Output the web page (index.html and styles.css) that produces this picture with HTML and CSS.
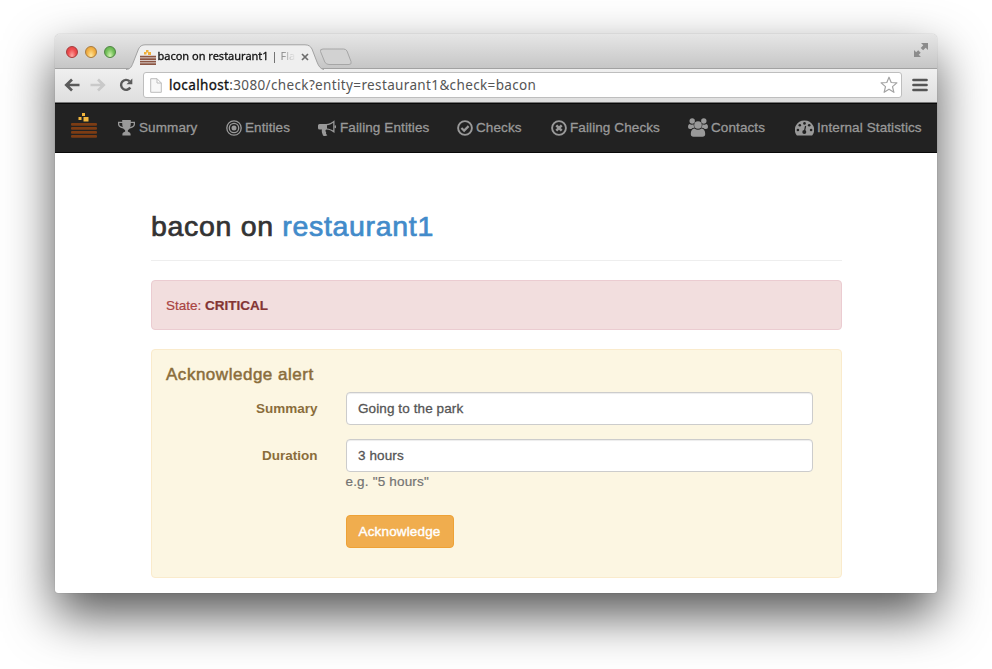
FILE: index.html
```html
<!DOCTYPE html>
<html lang="en">
<head>
<meta charset="utf-8">
<title>bacon on restaurant1 | Flapjack</title>
<link rel="stylesheet" href="styles.css">
</head>
<body>
<svg width="0" height="0" class="defs">
  <symbol id="flapjack" viewBox="0 0 26 25">
    <g fill="#f2b63d"><rect x="11" y="0" width="3" height="3"/><rect x="7.500" y="4" width="3" height="3"/><rect x="12.500" y="4" width="5" height="4.500"/></g>
    <g fill="#7c3c14"><rect y="10" width="26" height="2.800" rx="1"/><rect y="14" width="26" height="2.800" rx="1"/><rect y="18" width="26" height="2.800" rx="1"/><rect y="22" width="26" height="2.800" rx="1"/></g>
  </symbol>
</svg>
<div class="window">
  <header class="tabbar">
    <div class="lights"><i class="red"></i><i class="yellow"></i><i class="green"></i></div>
    <div class="tab">
      <svg class="tab-shape" viewBox="0 0 198 26"><path d="M0 25.500C4 25 5 24 7 19L12.500 5Q14.500 .8 19 .8H179Q184 .8 186 5L191 18Q193.500 25 198 25.500Z" fill="#efefef"/><path d="M0 25.500C4 25 5 24 7 19L12.500 5Q14.500 .8 19 .8H179Q184 .8 186 5L191 18Q193.500 25 198 25.500" fill="none" stroke="#a2a2a2"/></svg>
      <svg class="favicon" viewBox="0 0 16 15"><g fill="#f0ae38"><rect x="6" width="2.500" height="2.500"/><rect x="4" y="2" width="2.500" height="2.500"/><rect x="8" y="2" width="3" height="3"/></g><path d="M0 6.700h16M0 9.200h16M0 11.700h16M0 14.200h16" stroke="#8b5543" stroke-width="1.700"/></svg>
      <span class="tab-title">bacon on restaurant1 <span>| Flap</span></span>
      <svg class="close" viewBox="0 0 8 8"><path d="M1 1l6 6M7 1L1 7" stroke="#6d6d6d" stroke-width="1.700"/></svg>
    </div>
    <svg class="newtab" viewBox="0 0 34 18"><path d="M4 1H24.500Q27 1 28 3L32 13.500Q33 16.500 30 16.500H10Q7 16.500 5.800 14L1.500 3.500Q.8 1 4 1Z" fill="#d2d2d2" stroke="#a6a6a6"/></svg>
    <svg class="expand" viewBox="0 0 14 14"><path d="M7 0h7v7l-2.300-2.300-2.600 2.600-2.400-2.400 2.600-2.600zM0 7l2.200 2.200 2-2 2.500 2.500-2 2L7 14H0z" fill="#8c8c8c"/></svg>
  </header>
  <div class="toolbar">
    <svg class="back" viewBox="0 0 16 14"><path d="M15.500 7H3M8 1.500L2.300 7 8 12.500" fill="none" stroke="#5b5b5b" stroke-width="2.700"/></svg>
    <svg class="fwd" viewBox="0 0 16 14"><path d="M.5 7H13M8 1.500L13.700 7 8 12.500" fill="none" stroke="#c9c9c9" stroke-width="2.700"/></svg>
    <svg class="reload" viewBox="0 0 14 14"><path d="M11.300 9.500A5 5 0 1 1 10.500 3.200" fill="none" stroke="#5b5b5b" stroke-width="2.400"/><path d="M13.300.5V6.300H7.500z" fill="#5b5b5b"/></svg>
    <div class="url">
      <svg class="page" viewBox="0 0 12 15"><path d="M.7.700H7L11.300 5V14.300H.7Z M7 .7V5h4.300" fill="#f7f7f7" stroke="#bcbcbc"/></svg>
      <span class="address"><b>localhost</b>:3080/check?entity=restaurant1&amp;check=bacon</span>
      <svg class="star" viewBox="0 0 18 18"><path d="M9 1.200l2.200 5.300 5.700.4-4.400 3.700 1.400 5.700L9 13.200l-4.900 3.100 1.400-5.700L1.100 6.900l5.700-.4z" fill="#fff" stroke="#a3a3a3" stroke-width="1.200" stroke-linejoin="round"/></svg>
    </div>
    <svg class="menu" viewBox="0 0 16 14"><path d="M1.500 2h13M1.500 7h13M1.500 12h13" stroke="#555" stroke-width="2.700" stroke-linecap="round"/></svg>
  </div>
  <nav class="nav">
    <svg class="brand"><use href="#flapjack"/></svg>
    <a class="summary"><svg viewBox="0 0 17 16"><path d="M4.200 0h8.600v1.800H17v2.500C17 6.500 14.700 8.300 11.800 8.500 10.800 9.600 9.800 10 9.800 11c0 1.200 2.800 1 2.800 3.200V15.500H4.400V14.200C4.400 12 7.200 12.200 7.200 11c0-1-1-1.400-2-2.500C2.300 8.300 0 6.500 0 4.300V1.800H4.200zM4.200 3H1.300v1.300c0 1.200 1.500 2.400 3.500 2.800C4.300 6 4.200 4.500 4.200 3zM12.800 3c0 1.500-.1 3-.6 4.100 2-.4 3.500-1.600 3.500-2.800V3z" fill="#999" fill-rule="evenodd"/></svg><span>Summary</span></a>
    <a class="entities"><svg viewBox="0 0 16 16"><g fill="none" stroke="#999"><circle cx="8" cy="8" r="7.200" stroke-width="1.300"/><circle cx="8" cy="8" r="4.700" stroke-width="1.300"/></g><circle cx="8" cy="8" r="2.500" fill="#999"/></svg><span>Entities</span></a>
    <a class="failing"><svg viewBox="0 0 18 16"><path d="M1.500 4H8C11 4 14 2.500 16.500.3V13C14 11 11.500 9.700 8.500 9.500c-1.500.6-1.200 2-.3 3-.6 1.100.2 1.800 1.200 2.700-1 1-3.300 1-4.400.2C4.300 13.500 3.300 11.800 4 9.500H1.500Q0 9.500 0 8V5.500Q0 4 1.500 4zM9 5.200v3.200c2.300.2 4.200.9 6.200 2.200V2.800C13.200 4.200 11.300 5 9 5.200z" fill="#999" fill-rule="evenodd"/><rect x="16.500" y="5.200" width="1.500" height="3" rx=".7" fill="#999"/></svg><span>Failing Entities</span></a>
    <a class="checks"><svg viewBox="0 0 16 16"><circle cx="8" cy="8" r="6.900" fill="none" stroke="#999" stroke-width="1.900"/><path d="M4.400 8l2.700 2.600 4.500-4.500" fill="none" stroke="#999" stroke-width="2.200"/></svg><span>Checks</span></a>
    <a class="failing-checks"><svg viewBox="0 0 16 16"><circle cx="8" cy="8" r="6.900" fill="none" stroke="#999" stroke-width="1.900"/><path d="M5.300 5.300l5.400 5.400M10.700 5.300l-5.400 5.400" stroke="#999" stroke-width="2.500"/></svg><span>Failing Checks</span></a>
    <a class="contacts"><svg viewBox="0 0 20 19"><g fill="#999"><circle cx="4.200" cy="3" r="2.700"/><circle cx="15.800" cy="3" r="2.700"/><path d="M1.500 6Q3.800 7.200 5.600 6.200 5.500 8.500 6.600 9.800 4.300 9.800 3.300 11H2Q0 11 0 9 0 6.500 1.500 6zM18.500 6Q16.200 7.200 14.400 6.200 14.500 8.500 13.400 9.800 15.700 9.800 16.700 11H18Q20 11 20 9 20 6.500 18.500 6z"/><circle cx="10" cy="7" r="3.800"/><path d="M6.400 10.500Q10 13 13.600 10.500 17.200 11 17.200 16 17.200 18.700 14.500 18.700H5.500Q2.800 18.700 2.800 16 2.800 11 6.400 10.500z"/></g></svg><span>Contacts</span></a>
    <a class="stats"><svg viewBox="0 0 19 16"><path d="M9.500.5A9.300 9.300 0 0 1 17.500 15Q17.200 15.500 16.500 15.500H2.500Q1.800 15.500 1.500 15A9.300 9.300 0 0 1 9.500.5z" fill="#999"/><g fill="#222"><circle cx="2.900" cy="10" r="1.300"/><circle cx="4.800" cy="5.300" r="1.300"/><circle cx="9.500" cy="3.400" r="1.300"/><circle cx="14.200" cy="5.300" r="1.300"/><circle cx="16.100" cy="10" r="1.300"/><circle cx="9.300" cy="12" r="2"/></g><path d="M9.300 12l1.300-6" stroke="#222" stroke-width="1.200"/></svg><span>Internal Statistics</span></a>
  </nav>
  <main>
    <h1>bacon on <a>restaurant1</a></h1>
    <div class="alert danger">State: <strong>CRITICAL</strong></div>
    <section class="alert warning">
      <h4>Acknowledge alert</h4>
      <div class="row"><label>Summary</label><div class="input">Going to the park</div></div>
      <div class="row second"><label>Duration</label><div class="input">3 hours</div></div>
      <p class="help">e.g. "5 hours"</p>
      <button class="btn">Acknowledge</button>
    </section>
  </main>
</div>
</body>
</html>
```
FILE: styles.css
```css
* { box-sizing: border-box; }
body { margin: 0; height: 669px; overflow: hidden; background: #fff; padding: 34px 55px 0; font: 13.500px/19px "Liberation Sans", Arial, sans-serif; color: #333; }
svg { display: block; flex: none; }
.defs { position: absolute; }
.window { width: 882px; height: 559px; background: #fff; border-radius: 5px 5px 3px 3px; box-shadow: 0 22px 50px rgba(0,0,0,.67), 0 0 1px rgba(0,0,0,.4); }
.tabbar { height: 35px; display: flex; align-items: flex-start; background: linear-gradient(#e6e6e6, #c6c6c6); border-bottom: 1px solid #a2a2a2; border-radius: 5px 5px 0 0; }
.lights { display: flex; gap: 7px; padding: 12px 0 0 11px; width: 71px; }
.lights i { width: 12px; height: 12px; border-radius: 50%; border: 1px solid; }
.red { background: radial-gradient(ellipse at 50% 90%, #ffaaa5, #ee4d4f 55%, #d83c40); border-color: #a53b3b !important; }
.yellow { background: radial-gradient(ellipse at 50% 90%, #ffe9a2, #f3b347 55%, #dd9836); border-color: #a87a3c !important; }
.green { background: radial-gradient(ellipse at 50% 90%, #d6f5b5, #76c25b 55%, #56a547); border-color: #4e8542 !important; }
.tab { width: 198px; height: 26px; margin-top: 10px; display: flex; position: relative; }
.tab-shape { position: absolute; inset: 0; width: 198px; height: 26px; }
.favicon { width: 16px; height: 15px; margin: 6px 0 0 14px; position: relative; }
.tab-title { position: relative; width: 142px; margin-left: 1.500px; padding-top: 2px; white-space: nowrap; color: #111; font: 11px/19px "Noto Sans", sans-serif; -webkit-text-stroke: .3px; -webkit-mask: linear-gradient(90deg, #000 116px, transparent 138px); mask: linear-gradient(90deg, #000 116px, transparent 138px); }
.tab-title span { color: #555; -webkit-text-stroke: 0; }
.close { position: relative; width: 8px; height: 8px; margin: 9px 0 0 1px; }
.newtab { width: 34px; height: 18px; margin: 14px 0 0 -5px; }
.expand { width: 14px; height: 14px; margin: 9px 9px 0 auto; }
.toolbar { height: 34px; display: flex; align-items: center; background: linear-gradient(#efefef, #dfdfdf); border-bottom: 1px solid #777; padding: 0 9px 1px; }
.back, .fwd { width: 16px; height: 14px; }
.fwd { margin-left: 10px; }
.reload { width: 14px; height: 14px; margin-left: 13px; }
.url { width: 760px; height: 26px; margin-left: 10px; background: #fff; border: 1px solid #bebebe; border-radius: 3px; display: flex; align-items: center; padding: 0 3px 0 6px; }
.page { width: 12px; height: 15px; }
.address { margin-left: 7px; font: 13.500px/22px "Noto Sans", sans-serif; letter-spacing: .36px; color: #555; white-space: nowrap; }
.address b { font-weight: 400; color: #111; -webkit-text-stroke: .3px; }
.star { width: 18px; height: 18px; margin-left: auto; }
.menu { width: 16px; height: 14px; margin-left: 10px; }
.nav { height: 50px; background: #222; border-top: 1px solid #090909; border-bottom: 1px solid #090909; display: grid; grid-template-columns: 47px 108px 92px 139px 94px 137px 107px 1fr; padding-left: 16px; color: #999; }
.brand { width: 26px; height: 25px; margin-top: 9px; }
.nav a { display: flex; align-items: center; padding-bottom: 1px; white-space: nowrap; letter-spacing: .1px; -webkit-text-stroke: .3px; }
.nav a svg { width: 16px; height: 16px; margin-right: 3px; }
.nav .summary svg { width: 17px; margin-right: 4px; }
.nav .failing svg { width: 18px; margin-right: 4px; }
.nav .contacts svg { width: 20px; height: 19px; margin-right: 3px; }
.nav .stats svg { width: 19px; }
main { width: 691px; margin-left: 96px; padding-top: 56px; }
h1 { margin: 0; height: 52px; border-bottom: 1px solid #eee; font-size: 28.500px; line-height: 34px; font-weight: 400; letter-spacing: .68px; -webkit-text-stroke: .7px; }
h1 a { color: #428bca; }
.alert { border: 1px solid; border-radius: 4px; padding: 15px 14px; }
.danger { height: 50px; margin-top: 19px; background: #f2dede; border-color: #ebccd1; color: #a94442; -webkit-text-stroke: .2px; }
.danger strong { color: #843534; }
.warning { height: 229px; margin-top: 19px; background: #fcf6e2; border-color: #faebcc; color: #8a6d3b; }
h4 { margin: 0 0 8px; font-size: 17px; line-height: 19px; font-weight: 400; letter-spacing: .52px; -webkit-text-stroke: .5px; }
.row { display: grid; grid-template-columns: 151.500px 467px; column-gap: 28px; align-items: center; }
.row.second { margin-top: 14px; }
label { text-align: right; font-weight: 700; }
.input { height: 33px; background: #fff; border: 1px solid #ccc; border-radius: 4px; box-shadow: inset 0 1px 1px rgba(0,0,0,.075); color: #555; padding: 6px 11.500px; letter-spacing: .1px; -webkit-text-stroke: .3px; }
.help { margin: 0 0 24px 179.500px; color: #737373; letter-spacing: .18px; -webkit-text-stroke: .2px; }
.btn { display: block; margin-left: 179.500px; width: 108px; height: 33px; padding: 0; border: 1px solid #eea236; border-radius: 4px; background: #f0ad4e; color: #fff; font: inherit; letter-spacing: .15px; -webkit-text-stroke: .4px; }
```
